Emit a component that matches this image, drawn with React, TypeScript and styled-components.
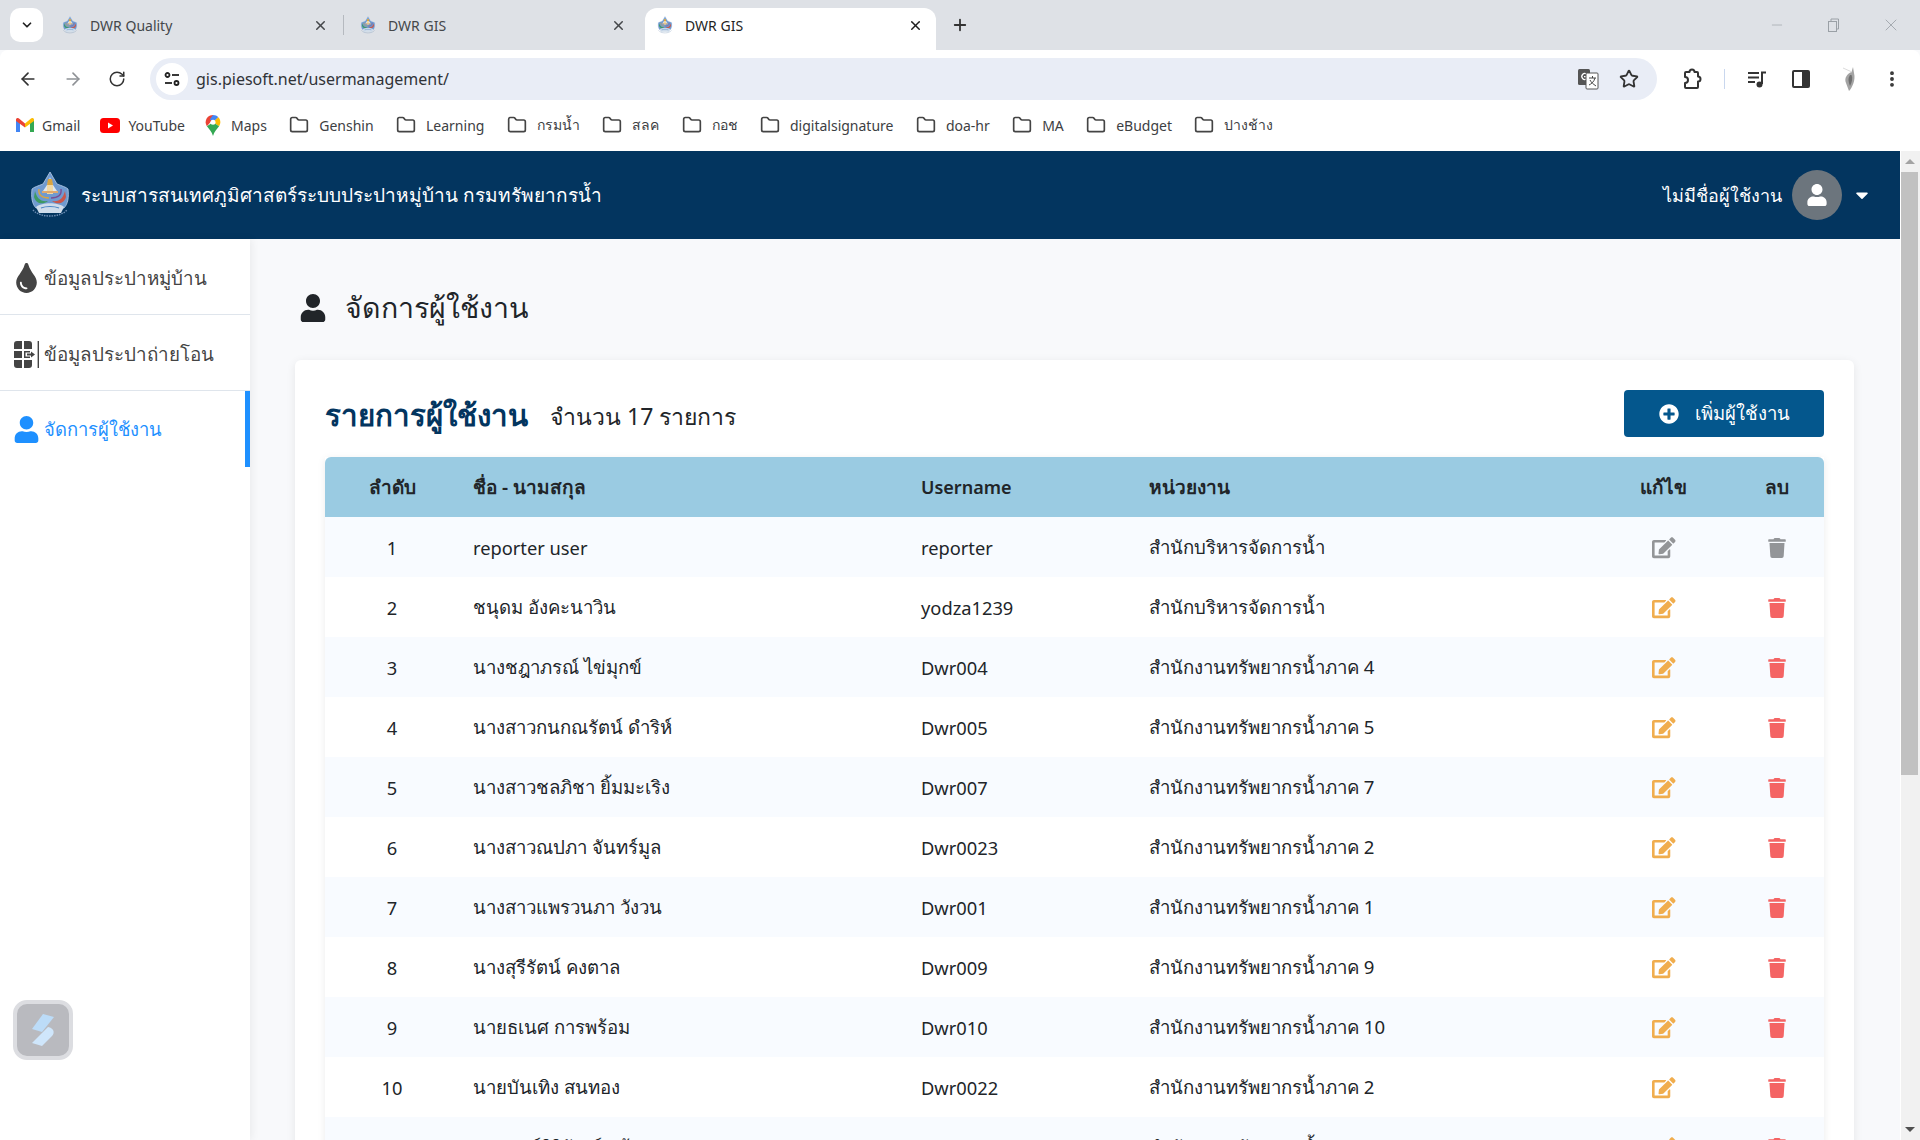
import * as React from 'react';
import styled, { createGlobalStyle } from 'styled-components';
import { FaUser, FaEdit, FaTrash, FaPlusCircle, FaCaretDown, FaTint } from 'react-icons/fa';
import { ArrowLeft, ArrowRight, RotateCw, X, Plus, ChevronDown, Minus, Star, Folder, MoreVertical } from 'lucide-react';

const FONT = `"Noto Sans", "Open Sans", "Liberation Sans", sans-serif`;

const GlobalStyle = createGlobalStyle`
  html, body {
    margin: 0;
    padding: 0;
    height: 1140px;
    overflow: hidden;
    background: #f8f9fb;
    font-family: ${FONT};
  }
  * { box-sizing: border-box; }
`;

const Screen = styled.div`
  width: 1920px;
  height: 1140px;
  display: flex;
  flex-direction: column;
  overflow: hidden;
`;

const TabStrip = styled.div`
  height: 50px;
  flex: none;
  background: #dee1e6;
  display: flex;
  align-items: flex-end;
  padding-left: 10px;
`;

const TabSearch = styled.div`
  width: 33px;
  height: 34px;
  margin: 0 7px 8px 0;
  background: #fff;
  border-radius: 10px;
  display: flex;
  align-items: center;
  justify-content: center;
  color: #222;
`;

const Tab = styled.div<{ $active?: boolean; $sep?: boolean }>`
  position: relative;
  width: ${p => (p.$active ? '291px' : '298px')};
  height: 42px;
  margin-left: ${p => (p.$active ? '-1px' : '0')};
  padding: 0 ${p => (p.$active ? '13px' : '20px')} 8px 11px;
  display: flex;
  align-items: center;
  font-size: 14px;
  color: ${p => (p.$active ? '#1f1f1f' : '#44474a')};
  background: ${p => (p.$active ? '#fff' : 'transparent')};
  border-radius: 12px 12px 0 0;
  ${p => p.$sep && `
    &::after {
      content: '';
      position: absolute;
      right: 4px;
      top: 7px;
      width: 1px;
      height: 20px;
      background: #b5b9bf;
    }
  `}
`;

const TabTitle = styled.span`
  flex: 1;
  margin-left: 11px;
`;

const NewTab = styled.div`
  margin: 0 0 8px 15px;
  height: 34px;
  display: flex;
  align-items: center;
  color: #333;
`;

const WindowButtons = styled.div`
  margin-left: auto;
  height: 50px;
  display: flex;
  align-items: center;
  gap: 41px;
  padding-right: 19px;
  color: #9aa0a6;
`;

const Toolbar = styled.div`
  height: 50px;
  flex: none;
  background: #fff;
  border-radius: 8px 8px 0 0;
  display: flex;
  align-items: center;
  padding: 8px 0 0 18px;
  color: #333;
`;

const NavButtons = styled.div`
  display: flex;
  align-items: center;
  gap: 25px;
  margin-right: 24px;
`;

const AddressBar = styled.div`
  width: 1507px;
  flex: none;
  height: 42px;
  background: #e9edf6;
  border-radius: 21px;
  display: flex;
  align-items: center;
  padding: 0 18px 0 4px;
`;

const SiteBadge = styled.div`
  width: 32px;
  height: 32px;
  border-radius: 50%;
  background: #fff;
  display: flex;
  align-items: center;
  justify-content: center;
  margin: 0 8px 0 2px;
`;

const Url = styled.span`
  flex: 1;
  font-size: 16px;
  color: #303338;
`;

const OmniIcons = styled.div`
  display: flex;
  align-items: center;
  gap: 20px;
`;

const TranslateIcon = styled.svg`
  width: 22px;
  height: 22px;
`;

const ToolIcons = styled.div`
  display: grid;
  grid-template-columns: 33px 32px 34px 54px 42px 44px;
  justify-items: center;
  align-items: center;
  padding-left: 18px;
  color: #333;
`;

const ToolDivider = styled.div`
  width: 1px;
  height: 20px;
  background: #c9d7ee;
`;

const PanelIcon = styled.div`
  width: 18px;
  height: 18px;
  border: 2px solid #333;
  border-right-width: 8px;
  border-radius: 2px;
`;

const Bookmarks = styled.div`
  height: 51px;
  flex: none;
  background: #fff;
  display: flex;
  align-items: center;
  padding: 0 0 1px 16px;
  gap: 22.4px;
`;

const BrandGroup = styled.div`
  display: flex;
  align-items: center;
  gap: 20px;
`;

const Bookmark = styled.div<{ $wide?: boolean }>`
  display: flex;
  align-items: center;
  gap: ${p => (p.$wide ? '10px' : '8px')};
  font-size: 14px;
  color: #3d4043;
`;

const Body = styled.div`
  flex: 1;
  min-height: 0;
  display: flex;
`;

const Page = styled.div`
  flex: 1;
  min-width: 0;
  display: flex;
  flex-direction: column;
`;

const Scrollbar = styled.div`
  width: 20px;
  flex: none;
  background: #f1f1f1;
  border-left: 1px solid #fff;
  padding-right: 2px;
  display: flex;
  flex-direction: column;
  align-items: stretch;
`;

const ScrollArrow = styled.div<{ $down?: boolean }>`
  height: 21px;
  flex: none;
  display: flex;
  align-items: center;
  justify-content: center;
  &::before {
    content: '';
    border-left: 5px solid transparent;
    border-right: 5px solid transparent;
    ${p => (p.$down ? 'border-top: 5px solid #505050;' : 'border-bottom: 5px solid #a3a3a3;')}
  }
`;

const ScrollThumb = styled.div`
  height: 603px;
  flex: none;
  background: #c1c1c1;
`;

const ScrollRest = styled.div`
  flex: 1;
`;

const TopBar = styled.header`
  height: 88px;
  flex: none;
  background: #03355f;
  display: flex;
  align-items: center;
  padding: 0 28px 0 26px;
  color: #fff;
`;

const AppTitle = styled.h1`
  margin: 0 0 0 7px;
  font-size: 19px;
  font-weight: 500;
  flex: 1;
`;

const UserName = styled.span`
  font-size: 18px;
  font-weight: 500;
  margin-right: 10px;
`;

const UserAvatar = styled.div`
  width: 50px;
  height: 50px;
  border-radius: 50%;
  background: #6c757d;
  display: flex;
  align-items: center;
  justify-content: center;
  margin-right: 10px;
`;

const Columns = styled.div`
  flex: 1;
  min-height: 0;
  display: flex;
`;

const Sidebar = styled.aside`
  width: 250px;
  flex: none;
  background: #fff;
  box-shadow: 2px 0 8px rgba(0, 0, 0, 0.06);
  display: flex;
  flex-direction: column;
  z-index: 1;
`;

const NavItem = styled.div<{ $active?: boolean }>`
  height: 76px;
  flex: none;
  display: flex;
  align-items: center;
  gap: 5px;
  padding: ${p => (p.$active ? '1px' : '3px')} 0 0 14px;
  font-size: ${p => (p.$active ? '18.4px' : '18.8px')};
  color: ${p => (p.$active ? '#1e90ff' : '#444')};
  border-bottom: ${p => (p.$active ? '0' : '1px solid #dfe5ec')};
  border-right: ${p => (p.$active ? '5px solid #1e90ff' : '0')};
`;

const NavIcon = styled.span`
  width: 25px;
  flex: none;
  display: flex;
  align-items: center;
  justify-content: center;
`;

const SideSpacer = styled.div`
  flex: 1;
`;

const AppBadge = styled.div`
  width: 60px;
  height: 60px;
  margin: 0 0 80px 13px;
  flex: none;
  background: #b9babf;
  border: 4px solid #dcdde1;
  border-radius: 14px;
  display: flex;
  align-items: center;
  justify-content: center;
`;

const Main = styled.main`
  flex: 1;
  min-width: 0;
  padding: 0 46px 0 45px;
  background: #f8f9fb;
  overflow: hidden;
`;

const PageHead = styled.div`
  height: 121px;
  display: flex;
  align-items: center;
  padding: 17px 0 0 4px;
  gap: 18px;
  color: #212529;
`;

const PageTitle = styled.h2`
  margin: 0;
  font-size: 28.5px;
  font-weight: 400;
`;

const Card = styled.section`
  background: #fff;
  border-radius: 6px;
  padding: 30px 30px 0;
  box-shadow: 0 2px 10px rgba(0, 0, 0, 0.08);
`;

const CardHead = styled.div`
  height: 67px;
  display: flex;
  align-items: flex-start;
  gap: 22px;
`;

const CardTitle = styled.h3`
  margin: 0;
  font-size: 29.5px;
  font-weight: 700;
  color: #03355f;
  line-height: 50px;
`;

const Count = styled.span`
  font-size: 23px;
  color: #212529;
  line-height: 52px;
  flex: 1;
`;

const AddButton = styled.button`
  width: 200px;
  height: 47px;
  border: 0;
  border-radius: 4px;
  background: #04578d;
  color: #fff;
  font-family: inherit;
  font-size: 18.5px;
  font-weight: 500;
  display: flex;
  align-items: center;
  justify-content: center;
  gap: 16px;
`;

const Table = styled.table`
  width: 1499px;
  table-layout: fixed;
  border-collapse: collapse;
  box-shadow: 0 2px 8px rgba(0, 0, 0, 0.08);
`;

const HeadRow = styled.tr`
  height: 60px;
  background: #9acbe2;
`;

const HeadCell = styled.th<{ $center?: boolean; $latin?: boolean; $w: number }>`
  width: ${p => p.$w}px;
  padding: 0 0 0 ${p => (p.$center ? '0' : '14px')};
  font-size: ${p => (p.$latin ? '18px' : '19px')};
  font-weight: 600;
  color: #212529;
  text-align: ${p => (p.$center ? 'center' : 'left')};
  &:first-child { border-top-left-radius: 6px; }
  &:last-child { border-top-right-radius: 6px; }
`;

const Row = styled.tr<{ $odd: boolean }>`
  height: 60px;
  background: ${p => (p.$odd ? '#f8fbff' : '#fff')};
`;

const Cell = styled.td<{ $center?: boolean; $thai?: boolean }>`
  padding: 0 0 0 ${p => (p.$center ? '0' : '14px')};
  font-size: ${p => (p.$thai ? '18.6px' : '18.3px')};
  color: #212529;
  text-align: ${p => (p.$center ? 'center' : 'left')};
  white-space: nowrap;
`;

const IconCell = styled.td<{ $tone: string; $nudge?: boolean }>`
  padding: 2px 0 0 ${p => (p.$nudge ? '2px' : '0')};
  text-align: center;
  color: ${p => p.$tone};
  line-height: 0;
`;

const rows = [
  ['reporter user', 'reporter', 'สำนักบริหารจัดการน้ำ'],
  ['ชนุดม อังคะนาวิน', 'yodza1239', 'สำนักบริหารจัดการน้ำ'],
  ['นางชฎาภรณ์ ไข่มุกข์', 'Dwr004', 'สำนักงานทรัพยากรน้ำภาค 4'],
  ['นางสาวกนกณรัตน์ ดำริห์', 'Dwr005', 'สำนักงานทรัพยากรน้ำภาค 5'],
  ['นางสาวชลภิชา ยิ้มมะเริง', 'Dwr007', 'สำนักงานทรัพยากรน้ำภาค 7'],
  ['นางสาวณปภา จันทร์มูล', 'Dwr0023', 'สำนักงานทรัพยากรน้ำภาค 2'],
  ['นางสาวแพรวนภา วังวน', 'Dwr001', 'สำนักงานทรัพยากรน้ำภาค 1'],
  ['นางสุรีรัตน์ คงตาล', 'Dwr009', 'สำนักงานทรัพยากรน้ำภาค 9'],
  ['นายธเนศ การพร้อม', 'Dwr010', 'สำนักงานทรัพยากรน้ำภาค 10'],
  ['นายบันเทิง สนทอง', 'Dwr0022', 'สำนักงานทรัพยากรน้ำภาค 2'],
  ['นายพงษ์ศิริวัฒน์ แก้ว', 'Dwr008', 'สำนักงานทรัพยากรน้ำภาค 8'],
];

const bookmarks = ['Genshin', 'Learning', 'กรมน้ำ', 'สลค', 'กอช', 'digitalsignature', 'doa-hr', 'MA', 'eBudget', 'ปางช้าง'];

const isThai = (s: string) => /[\u0E00-\u0E7F]/.test(s);

const Emblem = ({ size }: { size: number }) => (
  <svg width={size} height={size} viewBox="0 0 44 48">
    <path d="M22 1 L29 13 C34 15 38 16 40 18 C41 26 40 33 36 37 L8 37 C4 33 3 26 4 18 C6 16 10 15 15 13 Z" fill="#6f9ad0" stroke="#b7cde6" strokeWidth="0.8" />
    <path d="M22 6 L25 14 L29 20 L15 20 L19 14 Z" fill="#dfe7ee" />
    <path d="M20 8 h4 l1 6 h-6 Z" fill="#d9a441" />
    <path d="M19 14 h6 v9 h-6 Z" fill="#f1d9a5" />
    <path d="M14 20 h16 v2 h-16 Z" fill="#e0a96d" />
    <path d="M7 20 C9 27 12 31 20 30 C15 34 8 33 6 26 Z" fill="#3e9a63" />
    <path d="M11 18 C10 24 14 27 21 27" stroke="#d9a441" strokeWidth="1.4" fill="none" />
    <path d="M37 20 C35 27 32 31 24 30 C29 34 36 33 38 26 Z" fill="#c9574b" />
    <path d="M33 18 C34 24 30 27 23 27" stroke="#7a4c93" strokeWidth="1.4" fill="none" />
    <path d="M8 36 C14 31 30 31 36 36 L33 42 L11 42 Z" fill="#cfdcea" />
    <path d="M13 37 C18 35 26 35 31 37" stroke="#4b86c5" strokeWidth="1.2" fill="none" />
    <path d="M5 39 C12 47 32 47 39 39" stroke="#6d8db3" strokeWidth="1.4" fill="none" strokeDasharray="1.5 1" />
  </svg>
);

const GmailIcon = () => (
  <svg width="18" height="14" viewBox="0 0 18 14">
    <path d="M0 2 L0 14 L4 14 L4 5 Z" fill="#4285f4" />
    <path d="M18 2 L18 14 L14 14 L14 5 Z" fill="#34a853" />
    <path d="M0 1.5 C0 0 2 -0.5 3 0.5 L9 5.5 L9 9.5 L0 3 Z" fill="#ea4335" />
    <path d="M18 1.5 C18 0 16 -0.5 15 0.5 L9 5.5 L9 9.5 L18 3 Z" fill="#fbbc04" />
  </svg>
);

const YoutubeIcon = () => (
  <svg width="20" height="15" viewBox="0 0 20 15">
    <rect width="20" height="15" rx="3.5" fill="#f00" />
    <path d="M8 4.5 L13 7.5 L8 10.5 Z" fill="#fff" />
  </svg>
);

const MapsIcon = () => (
  <svg width="16" height="21" viewBox="0 0 14 20">
    <path d="M7 0 C3 0 0 3 0 7 C0 8.5 0.5 9.6 1.2 10.8 L7 4 Z" fill="#ea4335" />
    <path d="M7 0 C9 0 11 .8 12 2.2 L7 7 L4 4 Z" fill="#4285f4" />
    <path d="M12 2.2 C13.4 3.5 14 5 14 7 C14 8.5 13.4 9.6 12.8 10.8 L7 7 Z" fill="#fbbc04" />
    <path d="M1.2 10.8 L7 7 L12.8 10.8 C11 13.5 8 16 7 20 C6 16 3 13.5 1.2 10.8 Z" fill="#34a853" />
    <circle cx="7" cy="7" r="2.4" fill="#fff" />
  </svg>
);

const SiteControlsIcon = () => (
  <svg width="18" height="18" viewBox="0 0 18 18" fill="none" stroke="#222" strokeWidth="1.8">
    <circle cx="4.5" cy="5" r="2" />
    <path d="M9 5 H16" />
    <circle cx="13.5" cy="13" r="2" />
    <path d="M2 13 H9" />
  </svg>
);

const ExtensionIcon = () => (
  <svg width="24" height="24" viewBox="0 0 24 24" fill="none" stroke="#333" strokeWidth="2" strokeLinejoin="round">
    <path d="M6 5 H9.5 A2.5 2.5 0 0 1 14.5 5 H17 A1 1 0 0 1 18 6 V9.5 A2.5 2.5 0 0 1 18 14.5 V20 A1 1 0 0 1 17 21 H6 A1 1 0 0 1 5 20 V16 A3 3 0 0 0 5 10 V6 A1 1 0 0 1 6 5 Z" />
  </svg>
);

const MediaIcon = () => (
  <svg width="20" height="20" viewBox="0 0 20 20" fill="none" stroke="#333" strokeWidth="2">
    <path d="M1 4 H12 M1 8.5 H12 M1 13 H8" />
    <path d="M15 15 V3.5 H19" />
    <circle cx="12.5" cy="15.5" r="3" fill="#333" stroke="none" />
  </svg>
);

const AccountIcon = () => (
  <svg width="16" height="24" viewBox="0 0 16 24">
    <path d="M12 0 L10.5 5 C6 7 3 11 5 16 L8 24 C11 21 15 13 13 6 Z" fill="#a3a3a3" />
    <path d="M9 8 C7 11 7 14 9 19 C11 15 12 11 10.5 8 Z" fill="#6f6f6f" />
    <path d="M2 1 L11 5" stroke="#dcdcdc" strokeWidth="1" />
  </svg>
);

const TransferIcon = () => (
  <svg width="25" height="27" viewBox="0 0 25 27">
    <path d="M3 0 H8 V8 H0 V3 A3 3 0 0 1 3 0 Z M10 0 H15 A3 3 0 0 1 18 3 V8 H10 Z M0 10 H8 V17 H0 Z M0 19 H8 V27 H3 A3 3 0 0 1 0 24 Z M10 19 H18 V24 A3 3 0 0 1 15 27 H10 Z" fill="#444" />
    <path d="M10 10 H16 V11.5 H11.5 V15.5 H16 V17 H10 Z" fill="#444" />
    <path d="M13 12.6 H17 V10.6 L21 13.5 L17 16.4 V14.4 H13 Z" fill="#444" />
    <rect x="23.6" y="0" width="1.4" height="27" fill="#444" />
  </svg>
);

const App = () => (
  <Screen>
    <GlobalStyle />
    <TabStrip>
      <TabSearch><ChevronDown size={14} strokeWidth={3} /></TabSearch>
      <Tab $sep><Emblem size={18} /><TabTitle>DWR Quality</TabTitle><X size={15} strokeWidth={2.4} /></Tab>
      <Tab><Emblem size={18} /><TabTitle>DWR GIS</TabTitle><X size={15} strokeWidth={2.4} /></Tab>
      <Tab $active><Emblem size={18} /><TabTitle>DWR GIS</TabTitle><X size={15} strokeWidth={2.4} /></Tab>
      <NewTab><Plus size={18} strokeWidth={2.4} /></NewTab>
      <WindowButtons>
        <Minus size={16} strokeWidth={1} />
        <svg width="14" height="14" viewBox="0 0 14 14" fill="none" stroke="#9aa0a6"><rect x="2.5" y="3.5" width="8" height="10" /><path d="M5 3 V1 H12.5 V11 H11" /></svg>
        <X size={20} strokeWidth={1} />
      </WindowButtons>
    </TabStrip>
    <Toolbar>
      <NavButtons>
        <ArrowLeft size={20} />
        <ArrowRight size={20} color="#8f9296" />
        <RotateCw size={18} />
      </NavButtons>
      <AddressBar>
        <SiteBadge><SiteControlsIcon /></SiteBadge>
        <Url>gis.piesoft.net/usermanagement/</Url>
        <OmniIcons>
          <TranslateIcon viewBox="0 0 22 22">
            <rect x="1" y="1" width="12" height="16" rx="1.5" fill="#555" />
            <path d="M9.5 6 A3 3 0 1 0 9.5 11 V8.6 H7" fill="none" stroke="#fff" strokeWidth="1.3" />
            <rect x="9" y="5" width="12" height="16" rx="1" fill="#fff" stroke="#555" />
            <path d="M12 10 H19 M15.5 8 V10 M18 10 C17 14 14 16 12 17 M13 12 C14 14 16 16 19 18" stroke="#444" fill="none" />
          </TranslateIcon>
          <Star size={20} strokeWidth={2.2} color="#333" />
        </OmniIcons>
      </AddressBar>
      <ToolIcons>
        <ExtensionIcon />
        <ToolDivider />
        <MediaIcon />
        <PanelIcon />
        <AccountIcon />
        <MoreVertical size={20} strokeWidth={2.6} />
      </ToolIcons>
    </Toolbar>
    <Bookmarks>
      <BrandGroup>
        <Bookmark><GmailIcon />Gmail</Bookmark>
        <Bookmark><YoutubeIcon />YouTube</Bookmark>
        <Bookmark $wide><MapsIcon />Maps</Bookmark>
      </BrandGroup>
      {bookmarks.map(name => (
        <Bookmark key={name} $wide><Folder size={20} strokeWidth={2} color="#444" />{name}</Bookmark>
      ))}
    </Bookmarks>
    <Body>
      <Page>
        <TopBar>
          <Emblem size={48} />
          <AppTitle>ระบบสารสนเทศภูมิศาสตร์ระบบประปาหมู่บ้าน กรมทรัพยากรน้ำ</AppTitle>
          <UserName>ไม่มีชื่อผู้ใช้งาน</UserName>
          <UserAvatar><FaUser size={22} color="#fff" /></UserAvatar>
          <FaCaretDown size={20} color="#fff" />
        </TopBar>
        <Columns>
          <Sidebar>
            <NavItem><NavIcon><FaTint size={30} color="#444" /></NavIcon>ข้อมูลประปาหมู่บ้าน</NavItem>
            <NavItem><NavIcon><TransferIcon /></NavIcon>ข้อมูลประปาถ่ายโอน</NavItem>
            <NavItem $active><NavIcon><FaUser size={27} /></NavIcon>จัดการผู้ใช้งาน</NavItem>
            <SideSpacer />
            <AppBadge>
              <svg width="26" height="34" viewBox="0 0 26 34">
                <path d="M13 1 L24 4 L12 19 L2 16 Z" fill="#bcdcf8" />
                <path d="M18 14 C24 15 25 20 22 23 L12 33 L2 30 Z" fill="#cfe6fb" />
              </svg>
            </AppBadge>
          </Sidebar>
          <Main>
            <PageHead>
              <FaUser size={28} />
              <PageTitle>จัดการผู้ใช้งาน</PageTitle>
            </PageHead>
            <Card>
              <CardHead>
                <CardTitle>รายการผู้ใช้งาน</CardTitle>
                <Count>จำนวน 17 รายการ</Count>
                <AddButton><FaPlusCircle size={20} />เพิ่มผู้ใช้งาน</AddButton>
              </CardHead>
              <Table>
                <thead>
                  <HeadRow>
                    <HeadCell $center $w={134}>ลำดับ</HeadCell>
                    <HeadCell $w={448}>ชื่อ - นามสกุล</HeadCell>
                    <HeadCell $latin $w={228}>Username</HeadCell>
                    <HeadCell $w={461}>หน่วยงาน</HeadCell>
                    <HeadCell $center $w={134}>แก้ไข</HeadCell>
                    <HeadCell $center $w={94}>ลบ</HeadCell>
                  </HeadRow>
                </thead>
                <tbody>
                  {rows.map((r, i) => (
                    <Row key={r[1]} $odd={i % 2 === 0}>
                      <Cell $center>{i + 1}</Cell>
                      <Cell $thai={isThai(r[0])}>{r[0]}</Cell>
                      <Cell>{r[1]}</Cell>
                      <Cell $thai>{r[2]}</Cell>
                      <IconCell $nudge $tone={i === 0 ? '#939598' : '#f0ad4e'}><FaEdit size={23.5} /></IconCell>
                      <IconCell $tone={i === 0 ? '#939598' : '#f46464'}><FaTrash size={20} /></IconCell>
                    </Row>
                  ))}
                </tbody>
              </Table>
            </Card>
          </Main>
        </Columns>
      </Page>
      <Scrollbar>
        <ScrollArrow />
        <ScrollThumb />
        <ScrollRest />
        <ScrollArrow $down />
      </Scrollbar>
    </Body>
  </Screen>
);

export default App;
